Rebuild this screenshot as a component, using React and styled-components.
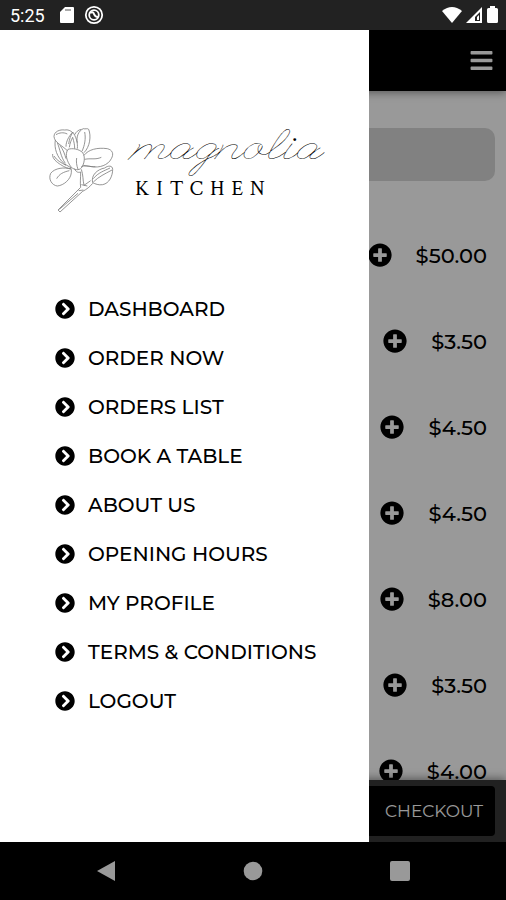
import styled, { createGlobalStyle } from "styled-components";
import { FaBars, FaChevronCircleRight, FaPlusCircle } from "react-icons/fa";

const MENU_ITEMS = [
  "DASHBOARD",
  "ORDER NOW",
  "ORDERS LIST",
  "BOOK A TABLE",
  "ABOUT US",
  "OPENING HOURS",
  "MY PROFILE",
  "TERMS & CONDITIONS",
  "LOGOUT",
];

const PRICES = ["$50.00", "$3.50", "$4.50", "$4.50", "$8.00", "$3.50", "$4.00"];

function StatusBar() {
  return (
    <StStatusBar>
      <StStatusGroup>
        <StClock>5:25</StClock>
        <svg width="14" height="18" viewBox="0 0 14 18" aria-hidden="true">
          <path d="M5 1h8q1 0 1 1v14q0 1-1 1H1q-1 0-1-1V6z" fill="#fff" />
          <path d="M5 4h6" stroke="#aaa" strokeWidth="2" />
        </svg>
        <svg width="20" height="20" viewBox="0 0 20 20" aria-hidden="true">
          <g fill="none" stroke="#fff">
            <circle cx="10" cy="10" r="8.2" strokeWidth="1.8" />
            <circle cx="10" cy="10" r="4.8" strokeWidth="1.8" />
            <path d="M6 8q3-2 4 1t4 3" strokeWidth="2" />
          </g>
        </svg>
      </StStatusGroup>
      <StSignals>
        <svg width="20" height="18" viewBox="0 0 20 18" aria-hidden="true">
          <path d="M0 5Q10-3 20 5L10 17z" fill="#fff" />
        </svg>
        <svg width="17" height="18" viewBox="0 0 17 18" aria-hidden="true">
          <path d="M16 1v16H0z" fill="#fff" />
          <path d="M14 6v9H9v-4z" fill="#222" />
          <path d="M11 11l2-2v5h-2z" fill="#fff" />
        </svg>
        <svg width="11" height="18" viewBox="0 0 11 18" aria-hidden="true">
          <path
            d="M3 0h5v2h1.5q1.5 0 1.5 1.5v12q0 1.5-1.5 1.5h-8Q0 17 0 15.5v-12Q0 2 1.5 2H3z"
            fill="#fff"
          />
        </svg>
      </StSignals>
    </StStatusBar>
  );
}

function Flower() {
  return (
    <svg width="66" height="88" viewBox="27 34 198 264" aria-hidden="true">
      <g fill="none" stroke="#7a7a7a" strokeWidth="2.4" strokeLinejoin="round">
        <path d="M84 104C74 118 80 140 94 158C104 166 116 168 124 160C134 146 136 126 128 114C116 102 96 100 84 104z" />
        <path d="M110 130C108 142 110 152 114 164" />
        <path d="M82 108C66 92 44 84 42 66C42 50 60 44 74 46C84 44 92 48 98 54C92 62 88 74 86 88" />
        <path d="M46 76C42 100 50 128 74 148L94 160" />
        <path d="M52 84C60 104 62 126 76 146M60 92C70 106 74 118 78 132M48 60C58 54 70 52 82 58" />
        <path d="M78 96C78 80 86 66 98 52C108 66 114 84 112 102" />
        <path d="M88 98C90 84 94 76 98 68C102 82 104 90 104 102" />
        <path d="M112 84C108 66 116 48 130 42C136 44 142 40 146 44C154 64 150 96 132 114" />
        <path d="M134 52C138 72 134 92 126 110M104 60C108 52 114 46 124 44" />
        <path d="M132 122C146 104 172 98 202 102C218 106 222 118 214 132C204 152 178 160 156 156C146 154 136 154 130 152" />
        <path d="M134 134C152 130 166 136 184 128M124 156C140 150 150 158 166 156" />
        <path d="M38 118C36 132 50 142 62 150C74 158 84 162 94 162M42 124C50 138 64 144 78 152" />
        <path d="M94 164C74 156 44 160 32 176C24 194 36 212 52 214C72 212 92 194 94 174z" />
        <path d="M88 168C70 172 58 178 50 192" />
        <path d="M158 204C152 182 172 164 194 160C204 152 218 152 218 164C218 184 208 206 188 210C176 212 166 208 158 204z" />
        <path d="M160 202C176 186 194 178 216 166M160 192C174 174 194 168 210 160" />
        <path d="M104 162C108 174 116 174 122 172C122 190 120 204 122 218M124 164C130 182 128 194 132 212" />
        <path d="M122 218L54 286L60 292L128 230C140 224 150 216 158 206M132 212L152 198M124 210L142 214M116 228L130 226M58 284L114 236" />
      </g>
    </svg>
  );
}

function App() {
  return (
    <StPhone>
      <GlobalStyle />
      <StatusBar />
      <StStage>
        <StHeader>
          <StMenuButton type="button" aria-label="Menu">
            <FaBars size={25} />
          </StMenuButton>
        </StHeader>
        <StContent>
          <StSearch type="search" aria-label="Search" />
          <StPriceList>
            {PRICES.map((price, index) => (
              <StPriceRow key={index}>
                <StAddButton type="button" aria-label="Add">
                  <FaPlusCircle size={24} />
                </StAddButton>
                <span>{price}</span>
              </StPriceRow>
            ))}
          </StPriceList>
        </StContent>
        <StFooter>
          <StCheckout type="button">CHECKOUT</StCheckout>
        </StFooter>
        <StScrim />
        <StDrawer>
          <StLogo>
            <Flower />
            <StLogoText>
              <StLogoName>magnolia</StLogoName>
              <StLogoKind>KITCHEN</StLogoKind>
            </StLogoText>
          </StLogo>
          <nav>
            <StMenu>
              {MENU_ITEMS.map((item) => (
                <li key={item}>
                  <StMenuLink href="#">
                    <FaChevronCircleRight size={20} />
                    {item}
                  </StMenuLink>
                </li>
              ))}
            </StMenu>
          </nav>
        </StDrawer>
      </StStage>
      <StSystemBar>
        <StSystemButton type="button" aria-label="Back">
          <svg width="20" height="22" viewBox="0 0 20 22">
            <path d="M1 11L19 1v20z" fill="#999" />
          </svg>
        </StSystemButton>
        <StSystemButton type="button" aria-label="Home">
          <svg width="20" height="20" viewBox="0 0 20 20">
            <circle cx="10" cy="10" r="9.3" fill="#999" />
          </svg>
        </StSystemButton>
        <StSystemButton type="button" aria-label="Recent apps">
          <svg width="20" height="20" viewBox="0 0 20 20">
            <rect width="20" height="20" rx="2" fill="#999" />
          </svg>
        </StSystemButton>
      </StSystemBar>
    </StPhone>
  );
}

export default App;

const GlobalStyle = createGlobalStyle`
  * {
    box-sizing: border-box;
  }
  body {
    margin: 0;
    font-family: Montserrat, Inter, sans-serif;
    color: #000;
  }
  button {
    padding: 0;
    border: 0;
    background: none;
    font: inherit;
    color: inherit;
  }
  svg {
    display: block;
    flex-shrink: 0;
  }
`;

const StPhone = styled.div`
  display: flex;
  flex-direction: column;
  height: 100vh;
  background: #000;
`;

const StStatusBar = styled.div`
  display: flex;
  align-items: center;
  justify-content: space-between;
  height: 30px;
  padding: 0 8px 0 10px;
  background: #222;
`;
const StStatusGroup = styled.div`
  display: flex;
  align-items: center;
  gap: 10px;
`;
const StSignals = styled.div`
  display: flex;
  align-items: center;
  gap: 4px;
`;
const StClock = styled.span`
  margin-right: 5px;
  font-family: Roboto, sans-serif;
  font-size: 18px;
  color: #fff;
`;

const StStage = styled.div`
  position: relative;
  display: flex;
  flex-direction: column;
  flex: 1;
  min-height: 0;
  overflow: hidden;
  background: #fff;
`;
const StHeader = styled.header`
  display: flex;
  align-items: center;
  justify-content: flex-end;
  height: 61px;
  flex-shrink: 0;
  padding: 0 12px;
  background: #000;
  box-shadow: 0 2px 8px rgba(0, 0, 0, 0.4);
`;
const StMenuButton = styled.button`
  color: #fff;
`;
const StContent = styled.main`
  flex: 1;
  min-height: 0;
  padding-top: 37px;
  overflow: hidden;
`;
const StSearch = styled.input`
  display: block;
  width: calc(100% - 22px);
  height: 53px;
  margin: 0 11px 31px;
  border: 0;
  border-radius: 10px;
  background: #d8d8d8;
`;
const StPriceList = styled.ul`
  margin: 0;
  padding: 0;
  list-style: none;
`;
const StPriceRow = styled.li`
  display: flex;
  align-items: center;
  justify-content: flex-end;
  gap: 24px;
  height: 86px;
  padding-right: 19px;
  font-size: 21px;
  font-weight: 500;
`;
const StAddButton = styled.button`
  border-radius: 50%;
`;
const StFooter = styled.footer`
  position: relative;
  flex-shrink: 0;
  padding: 6px 11px;
  background: #383838;
  box-shadow: 0 -2px 8px rgba(0, 0, 0, 0.4);
`;
const StCheckout = styled.button`
  display: block;
  width: 100%;
  height: 50px;
  padding: 0 12px;
  border-radius: 4px;
  background: #000;
  font-size: 17px;
  text-align: right;
  color: #fff;
`;

const StScrim = styled.div`
  position: absolute;
  inset: 0;
  background: rgba(0, 0, 0, 0.4);
`;
const StDrawer = styled.aside`
  position: absolute;
  top: 0;
  bottom: 0;
  left: 0;
  width: 73%;
  padding-top: 96px;
  background: #fff;
`;
const StLogo = styled.div`
  display: flex;
  gap: 20px;
  padding-left: 49px;
`;
const StLogoText = styled.div`
  display: flex;
  flex-direction: column;
`;
const StLogoName = styled.span`
  font-family: "League Script", Sacramento, cursive;
  font-size: 45px;
  line-height: 52px;
`;
const StLogoKind = styled.span`
  font-family: "Crimson Text", "Liberation Serif", serif;
  font-size: 21px;
  letter-spacing: 7px;
  line-height: 22px;
`;
const StMenu = styled.ul`
  margin: 70px 0 0;
  padding: 0 0 0 55px;
  list-style: none;
`;
const StMenuLink = styled.a`
  display: flex;
  align-items: center;
  gap: 13px;
  height: 49px;
  font-size: 20px;
  font-weight: 500;
  color: #000;
  text-decoration: none;
  white-space: nowrap;
`;

const StSystemBar = styled.div`
  display: flex;
  align-items: center;
  justify-content: space-between;
  height: 58px;
  flex-shrink: 0;
  padding: 0 19%;
  background: #000;
`;
const StSystemButton = styled.button`
  display: flex;
`;
